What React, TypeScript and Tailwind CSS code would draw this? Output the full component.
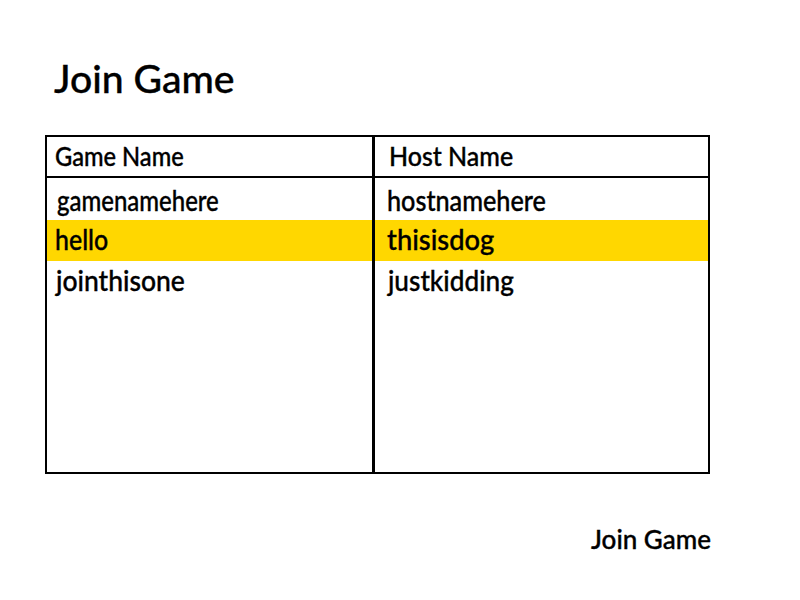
import React from "react";

type LabelProps = { text: string; className: string };

function Label({ text, className }: LabelProps) {
  return (
    <span
      className={`inline-block origin-bottom-left whitespace-pre font-medium [-webkit-text-stroke:0.35px_black] ${className}`}
    >
      {text}
    </span>
  );
}

const rows = [
  {
    game: "gamenamehere",
    host: "hostnamehere",
    row: "h-[42px] overflow-hidden pt-[3px]",
    gameFit: "ml-[10px] scale-x-[0.855]",
    hostFit: "ml-[12px] scale-x-[0.9]",
  },
  {
    game: "hello",
    host: "thisisdog",
    row: "h-[41px] bg-[#ffd700]",
    gameFit: "ml-[8px] scale-x-[0.89]",
    hostFit: "ml-[12px] scale-x-[0.975]",
  },
  {
    game: "jointhisone",
    host: "justkidding",
    row: "h-[210px] flex-1",
    gameFit: "ml-[9px] scale-x-[0.945]",
    hostFit: "ml-[13px] scale-x-[0.935]",
  },
];

export default function App() {
  return (
    <main className="flex h-[600px] w-[800px] flex-col overflow-hidden bg-white pl-[45px] font-['Lato',sans-serif] text-[28px] leading-[38px] text-black">
      <h1 className="h-[135px] pt-[53px] pl-[9px] text-[38px] leading-[50px]">
        <Label text="Join Game" className="scale-x-[1.03] [-webkit-text-stroke:0.7px_black]" />
      </h1>
      <section className="flex h-[339px] w-[665px] flex-col border-2 border-black">
        <div className="flex h-[41px] shrink-0 border-b-2 border-black text-[26px]">
          <div className="w-[328px] shrink-0 border-r-[3px] border-black">
            <Label text="Game Name" className="ml-[8px] scale-x-[0.91]" />
          </div>
          <div>
            <Label text="Host Name" className="ml-[14px] scale-x-[0.96]" />
          </div>
        </div>
        {rows.map((item) => (
          <div key={item.game} className={`flex ${item.row}`}>
            <div className="-mt-[3px] w-[328px] shrink-0 border-r-[3px] border-black pt-[3px]">
              <Label text={item.game} className={item.gameFit} />
            </div>
            <div>
              <Label text={item.host} className={item.hostFit} />
            </div>
          </div>
        ))}
      </section>
      <div className="mt-[46px] pl-[546px] text-[26px]">
        <button className="block">
          <Label text="Join Game" className="scale-x-[1]" />
        </button>
      </div>
    </main>
  );
}
